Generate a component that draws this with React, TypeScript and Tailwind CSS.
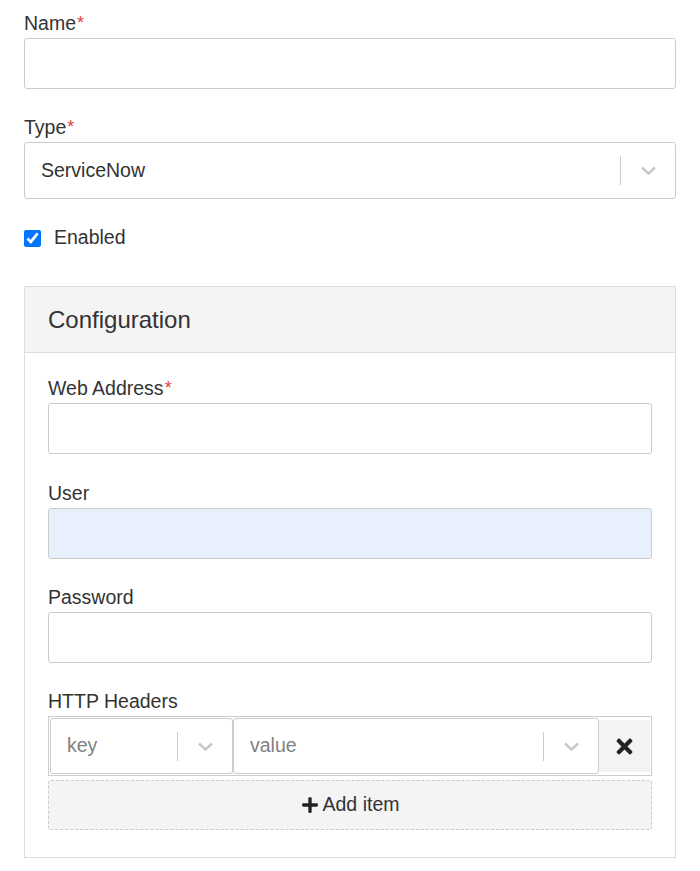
import React from "react";
import { FaTimes, FaPlus } from "react-icons/fa";

const Chevron = () => (
  <svg width="17" height="11" viewBox="0 0 17 11" fill="none">
    <polyline points="2,2.5 8.5,8.5 15,2.5" stroke="#c8c8c8" strokeWidth="2.4" />
  </svg>
);

const Label = ({ text, required }: { text: string; required?: boolean }) => (
  <div className="text-[19.5px] leading-[22px] h-[22px] mb-[4px] whitespace-nowrap">
    {text}
    {required && <span className="text-[#e2433c] text-[18px] ml-[1px] relative -top-[1px]">*</span>}
  </div>
);

const TextField = ({
  label,
  required,
  filled,
  gap = "mb-[28px]",
}: {
  label: string;
  required?: boolean;
  filled?: boolean;
  gap?: string;
}) => (
  <div className={gap}>
    <Label text={label} required={required} />
    <input
      className={
        "block w-full h-[51px] border border-[#cccccc] rounded-[3px] outline-none px-3 " +
        (filled ? "bg-[#e8f0fe]" : "bg-white")
      }
    />
  </div>
);

const SelectBox = ({
  text,
  placeholder,
  className,
}: {
  text: string;
  placeholder?: boolean;
  className?: string;
}) => (
  <div
    className={
      "flex items-center border border-[#cccccc] rounded-[3px] bg-white " + (className ?? "")
    }
  >
    <span
      className={
        "flex-1 pl-[16px] text-[19.5px] " + (placeholder ? "text-[#808080]" : "text-[#333333]")
      }
    >
      {text}
    </span>
    <div className="w-px h-[29px] bg-[#cccccc]" />
    <div className="w-[54px] flex items-center justify-center">
      <Chevron />
    </div>
  </div>
);

export default function App() {
  return (
    <div className="font-['Liberation_Sans',Arial,sans-serif] text-[#333333] bg-white w-[700px] min-h-[871px] px-[24px] pt-[12px]">
      <TextField label="Name" required gap="mb-[27px]" />

      <div>
        <Label text="Type" required />
        <SelectBox text="ServiceNow" className="h-[57px]" />
      </div>

      <label className="flex items-center h-[22px] mt-[28px]">
        <input type="checkbox" defaultChecked className="m-0 w-[17px] h-[17px] accent-[#0075ff]" />
        <span className="ml-[13px] text-[19.5px]">Enabled</span>
      </label>

      <div className="mt-[37px] border border-[#dddddd]">
        <div className="h-[66px] bg-[#f4f4f4] border-b border-[#dddddd] px-[23px] flex items-center text-[24px]">
          Configuration
        </div>
        <div className="px-[23px] pt-[24px] pb-[27px]">
          <TextField label="Web Address" required gap="mb-[27.5px]" />
          <TextField label="User" filled gap="mb-[27.5px]" />
          <TextField label="Password" gap="mb-[27px]" />

          <Label text="HTTP Headers" />
          <div className="flex h-[60px] border border-[#cccccc] p-px">
            <SelectBox text="key" placeholder className="w-[183px]" />
            <SelectBox text="value" placeholder className="flex-1" />
            <div className="w-[51px] my-[2px] bg-[#f3f3f3] flex items-center justify-center text-[#222222]">
              <FaTimes size={23} />
            </div>
          </div>
          <button className="mt-[4px] w-full h-[50px] border border-dashed border-[#cccccc] rounded-[3px] bg-[#f4f4f4] flex items-center justify-center text-[19.5px] text-[#333333]">
            <FaPlus size={18} className="mr-[4px] text-[#222222]" />
            Add item
          </button>
        </div>
      </div>
    </div>
  );
}
